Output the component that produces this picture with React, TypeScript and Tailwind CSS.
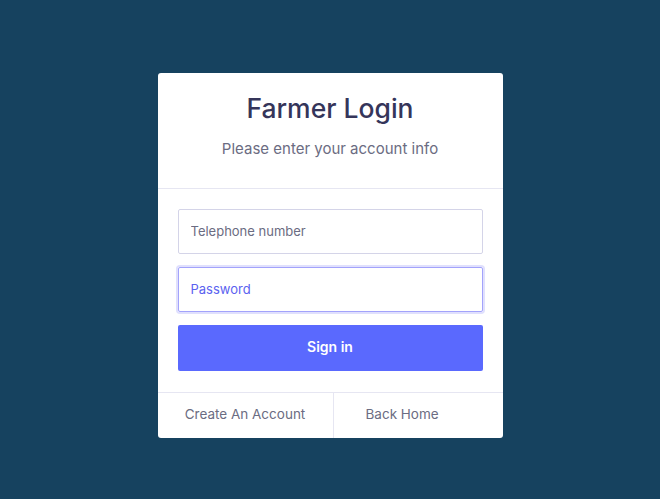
import React from "react";

export default function App() {
  return (
    <div
      className="min-h-[499px] w-full bg-[#16425f] flex justify-center pt-[73px]"
      style={{ fontFamily: "Inter, 'Noto Sans', sans-serif" }}
    >
      <div className="w-[345px] h-[365px] bg-white rounded-[3px] flex flex-col overflow-hidden">
        <div className="h-[116px] border-b border-[#e6e6f2] flex flex-col items-center">
          <h1 className="mt-[19px] text-[26.5px] leading-[32px] font-medium text-[#35355a]">
            Farmer Login
          </h1>
          <p className="mt-[15px] text-[15px] leading-[20px] text-[#6b6c82]">
            Please enter your account info
          </p>
        </div>
        <div className="px-5 pt-5 pb-[21px] flex flex-col gap-[13px] border-b border-[#e6e6f2]">
          <input
            type="text"
            placeholder="Telephone number"
            className="h-[45px] w-full border border-[#d4d4e8] rounded-[2px] px-[12px] pb-[2px] text-[13px] text-[#6b6c82] placeholder:text-[#6b6c82] outline-none"
          />
          <input
            type="password"
            placeholder="Password"
            autoFocus
            className="h-[45px] w-full border border-[#a3a3fb] rounded-[2px] px-[12px] pb-[2px] text-[13px] text-[#5b62f0] placeholder:text-[#5b62f0] outline-none shadow-[0_0_0_2px_#e0e0fd]"
          />
          <button className="h-[46px] w-full bg-[#5a69fe] rounded-[2px] text-white text-[14px] font-semibold leading-[20px] pb-[3px]">
            Sign in
          </button>
        </div>
        <div className="flex flex-1 pb-[3px]">
          <div className="w-[176px] border-r border-[#e6e6f2] -mb-[3px] flex items-center justify-center text-[13.5px] text-[#6b6c82]">
            <span className="-mt-[3px]">Create An Account</span>
          </div>
          <div className="flex-1 flex items-center pl-[32px] text-[13.5px] text-[#6b6c82]">
            Back Home
          </div>
        </div>
      </div>
    </div>
  );
}
